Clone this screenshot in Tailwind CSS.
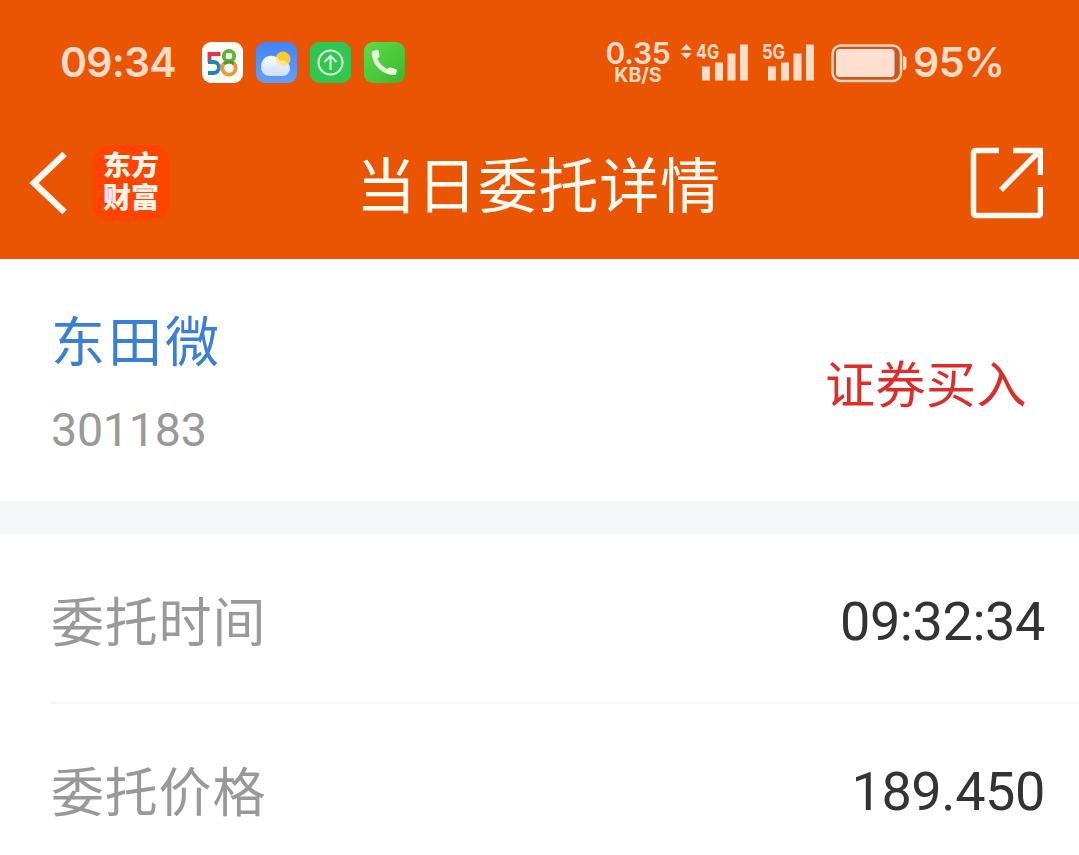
<!DOCTYPE html>
<html lang="zh-CN">
<head>
    <meta charset="UTF-8">
    <meta name="viewport" content="width=device-width, initial-scale=1.0">
    <title>当日委托详情</title>
    <script src="https://cdn.jsdelivr.net/npm/@tailwindcss/browser@4"></script>
</head>
<body class="bg-white overflow-hidden font-['Roboto','Noto_Sans_CJK_SC',sans-serif]">
    <header class="h-[259px] bg-[#ea5504]">
        <!-- Status bar -->
        <div class="h-[125px] flex items-center justify-between pl-[60px] pr-[76px] font-['Inter',sans-serif] font-semibold text-[#ffdbc8]">
            <div class="flex items-center">
                <span class="w-[142px] text-[41px] leading-none tracking-[-0.8px]">09:34</span>
                <div class="flex gap-[13px]">
                    <svg class="w-[41px] h-[41px]" viewBox="0 0 41 41" fill="none" stroke-width="3.800">
                        <rect width="41" height="41" rx="9" fill="#fffdf8"/>
                        <path d="M18.500 12H7.500v8" stroke="#e0354c"/>
                        <path d="M6 20h5.500a5.500 5.500 0 0 1 0 11H6" stroke="#2183bd"/>
                        <circle cx="27" cy="26" r="6.700" stroke="#e69a3a"/>
                        <circle cx="27" cy="14" r="5.200" stroke="#5cb531"/>
                        <path d="M22 22a7 7 0 0 1 10 0" stroke="#55952a" stroke-width="3"/>
                    </svg>
                    <svg class="w-[41px] h-[41px]" viewBox="0 0 41 41">
                        <defs>
                            <linearGradient id="sky" x1="0" y1="0" x2="0" y2="1"><stop stop-color="#4283f6"/><stop offset="1" stop-color="#62a0f6"/></linearGradient>
                            <linearGradient id="cloud" x1="0" y1="0" x2="0" y2="1"><stop stop-color="#f8fbff"/><stop offset="1" stop-color="#cfe0f8"/></linearGradient>
                            <linearGradient id="haze" x1="1" y1="0" x2="0" y2="1"><stop stop-color="#ffd044"/><stop offset="1" stop-color="#f5efcf"/></linearGradient>
                            <clipPath id="cloudClip"><path d="M13.500 34a8.500 8.500 0 0 1-8.300-10 10 10 0 0 1 18.800-5 8 8 0 0 1 10 7.500 7.500 7.500 0 0 1-7.500 7.500z"/></clipPath>
                        </defs>
                        <rect width="41" height="41" rx="9" fill="url(#sky)"/>
                        <circle cx="27" cy="17" r="7.500" fill="#ffc928"/>
                        <path d="M13.500 34a8.500 8.500 0 0 1-8.300-10 10 10 0 0 1 18.800-5 8 8 0 0 1 10 7.500 7.500 7.500 0 0 1-7.500 7.500z" fill="url(#cloud)"/>
                        <circle cx="27" cy="17" r="7.500" fill="url(#haze)" clip-path="url(#cloudClip)"/>
                    </svg>
                    <svg class="w-[41px] h-[41px]" viewBox="0 0 41 41" fill="none" stroke="#dcffdf" stroke-width="2">
                        <rect width="41" height="41" rx="9" fill="#30c650" stroke="none"/>
                        <circle cx="20.500" cy="20.500" r="12"/>
                        <path d="M20.500 28V14.500M14.500 20l6-6 6 6"/>
                    </svg>
                    <svg class="w-[41px] h-[41px]" viewBox="0 0 41 41">
                        <defs><linearGradient id="call" x1="0" y1="0" x2="1" y2="1"><stop stop-color="#5fdc4b"/><stop offset="1" stop-color="#3bb82d"/></linearGradient></defs>
                        <rect width="41" height="41" rx="9" fill="url(#call)"/>
                        <path d="M9 9l3.500-1.200c1-.3 2 .2 2.200 1.200l.8 4.500c.1 1-.2 1.700-1 2.200l-1.300 1c2 4.300 5.500 8 10 10.300l1.500-1c.6-.5 1.300-.6 2-.4l5 1.300c1 .3 1.300 1.100 1.100 2l-.8 3c-.3.900-1 1.300-2 1.200C17.500 32.500 8 22 7.700 11c0-.9.500-1.600 1.300-2z" fill="#e4fbdc"/>
                    </svg>
                </div>
            </div>
            <div class="flex items-center">
                <div class="w-[64px] flex flex-col items-center leading-none">
                    <span class="text-[30px] leading-[22px] tracking-[-0.2px]">0.35</span>
                    <span class="mt-[3px] text-[19.500px] leading-[17px] font-bold">KB/S</span>
                </div>
                <svg class="ml-[10px] w-[136px] h-[44px] overflow-visible" viewBox="680 40.500 136 44" fill="currentColor">
                    <path d="M686.300 43.500l5.500 6h-11zM686.300 58.500l5.500-6h-11z"/>
                    <text x="696" y="58.500" font-size="20.500" font-weight="700" textLength="23" lengthAdjust="spacingAndGlyphs">4G</text>
                    <path d="M702 66h8v14h-8zM715 62h8v18h-8zM727.500 53h8v27h-8zM740 44h8v36h-8z"/>
                    <text x="762" y="58.500" font-size="20.500" font-weight="700" textLength="23" lengthAdjust="spacingAndGlyphs">5G</text>
                    <path d="M768 66h8v14h-8zM781 62h8v18h-8zM793.500 53h8v27h-8zM806 44h8v36h-8z"/>
                </svg>
                <svg class="ml-[14px] w-[77px] h-[40px]" viewBox="0 0 77 40">
                    <rect x="2.500" y="2.500" width="68.500" height="35.500" rx="8.500" fill="#c25a22" stroke="#ffd3b7" stroke-width="2.500"/>
                    <rect x="6" y="6" width="58.500" height="28" rx="4" fill="#ffdfd0"/>
                    <path d="M73 13h1.500q2 1 2 3v8q0 2-2 3H73z" fill="#ffdbc8"/>
                </svg>
                <span class="ml-[6px] w-[90px] text-[41px] leading-none tracking-[-0.6px] whitespace-nowrap">95%</span>
            </div>
        </div>
        <!-- Title bar -->
        <div class="h-[115px] grid grid-cols-[1fr_auto_1fr] items-center pl-[28px] pr-[36px]">
            <div class="flex items-center">
                <svg class="w-[40px] h-[64px]" viewBox="0 0 40 64" fill="none" stroke="#fffaf2" stroke-width="6.500">
                    <path d="M36.500 3L6 32l30.500 29"/>
                </svg>
                <div class="ml-[25px] w-[76px] h-[76px] rounded-[16px] bg-[#ff4400] text-[#fff3e6] text-[28px] leading-[32px] font-black flex flex-col items-center justify-center">
                    <span>东方</span>
                    <span>财富</span>
                </div>
            </div>
            <h1 class="pt-[11px] pl-[6px] text-[60px] leading-none tracking-[0.8px] text-[#fffaf2] whitespace-nowrap">当日委托详情</h1>
            <svg class="justify-self-end w-[74px] h-[74px]" viewBox="0 0 74 74" fill="none" stroke="#fffaf2" stroke-width="5.500">
                <path d="M30 4.500H7.500q-3 0-3 3v59q0 3 3 3h61q3 0 3-3V41M44 4.500h27.500V29M70 5.500L32 44"/>
            </svg>
        </div>
    </header>

    <section class="h-[242px] flex items-center justify-between pt-[12px] pl-[51px] pr-[52px]">
        <div>
            <h2 class="text-[54px] leading-[60px] tracking-[3px] text-[#3a7fd5]">东田微</h2>
            <p class="mt-[28px] text-[46.500px] leading-[56px] tracking-[-0.2px] text-[#999]">301183</p>
        </div>
        <span class="text-[50px] leading-none tracking-[0.5px] text-[#dc2d2d]">证券买入</span>
    </section>

    <div class="h-[33px] bg-[#f5f6f8]"></div>

    <dl>
        <div class="h-[170px] flex items-center justify-between ml-[51px] pr-[34px] border-b-2 border-[#f5f5f5]">
            <dt class="pt-[13px] text-[53px] leading-none tracking-[0.8px] text-[#999]">委托时间</dt>
            <dd class="pt-[8px] text-[54px] leading-none tracking-[-0.4px] text-[#333]">09:32:34</dd>
        </div>
        <div class="h-[170px] flex items-center justify-between ml-[51px] pr-[34px]">
            <dt class="pt-[11px] text-[53px] leading-none tracking-[0.8px] text-[#999]">委托价格</dt>
            <dd class="pt-[6px] text-[54px] leading-none tracking-[-0.4px] text-[#333]">189.450</dd>
        </div>
    </dl>
</body>
</html>
